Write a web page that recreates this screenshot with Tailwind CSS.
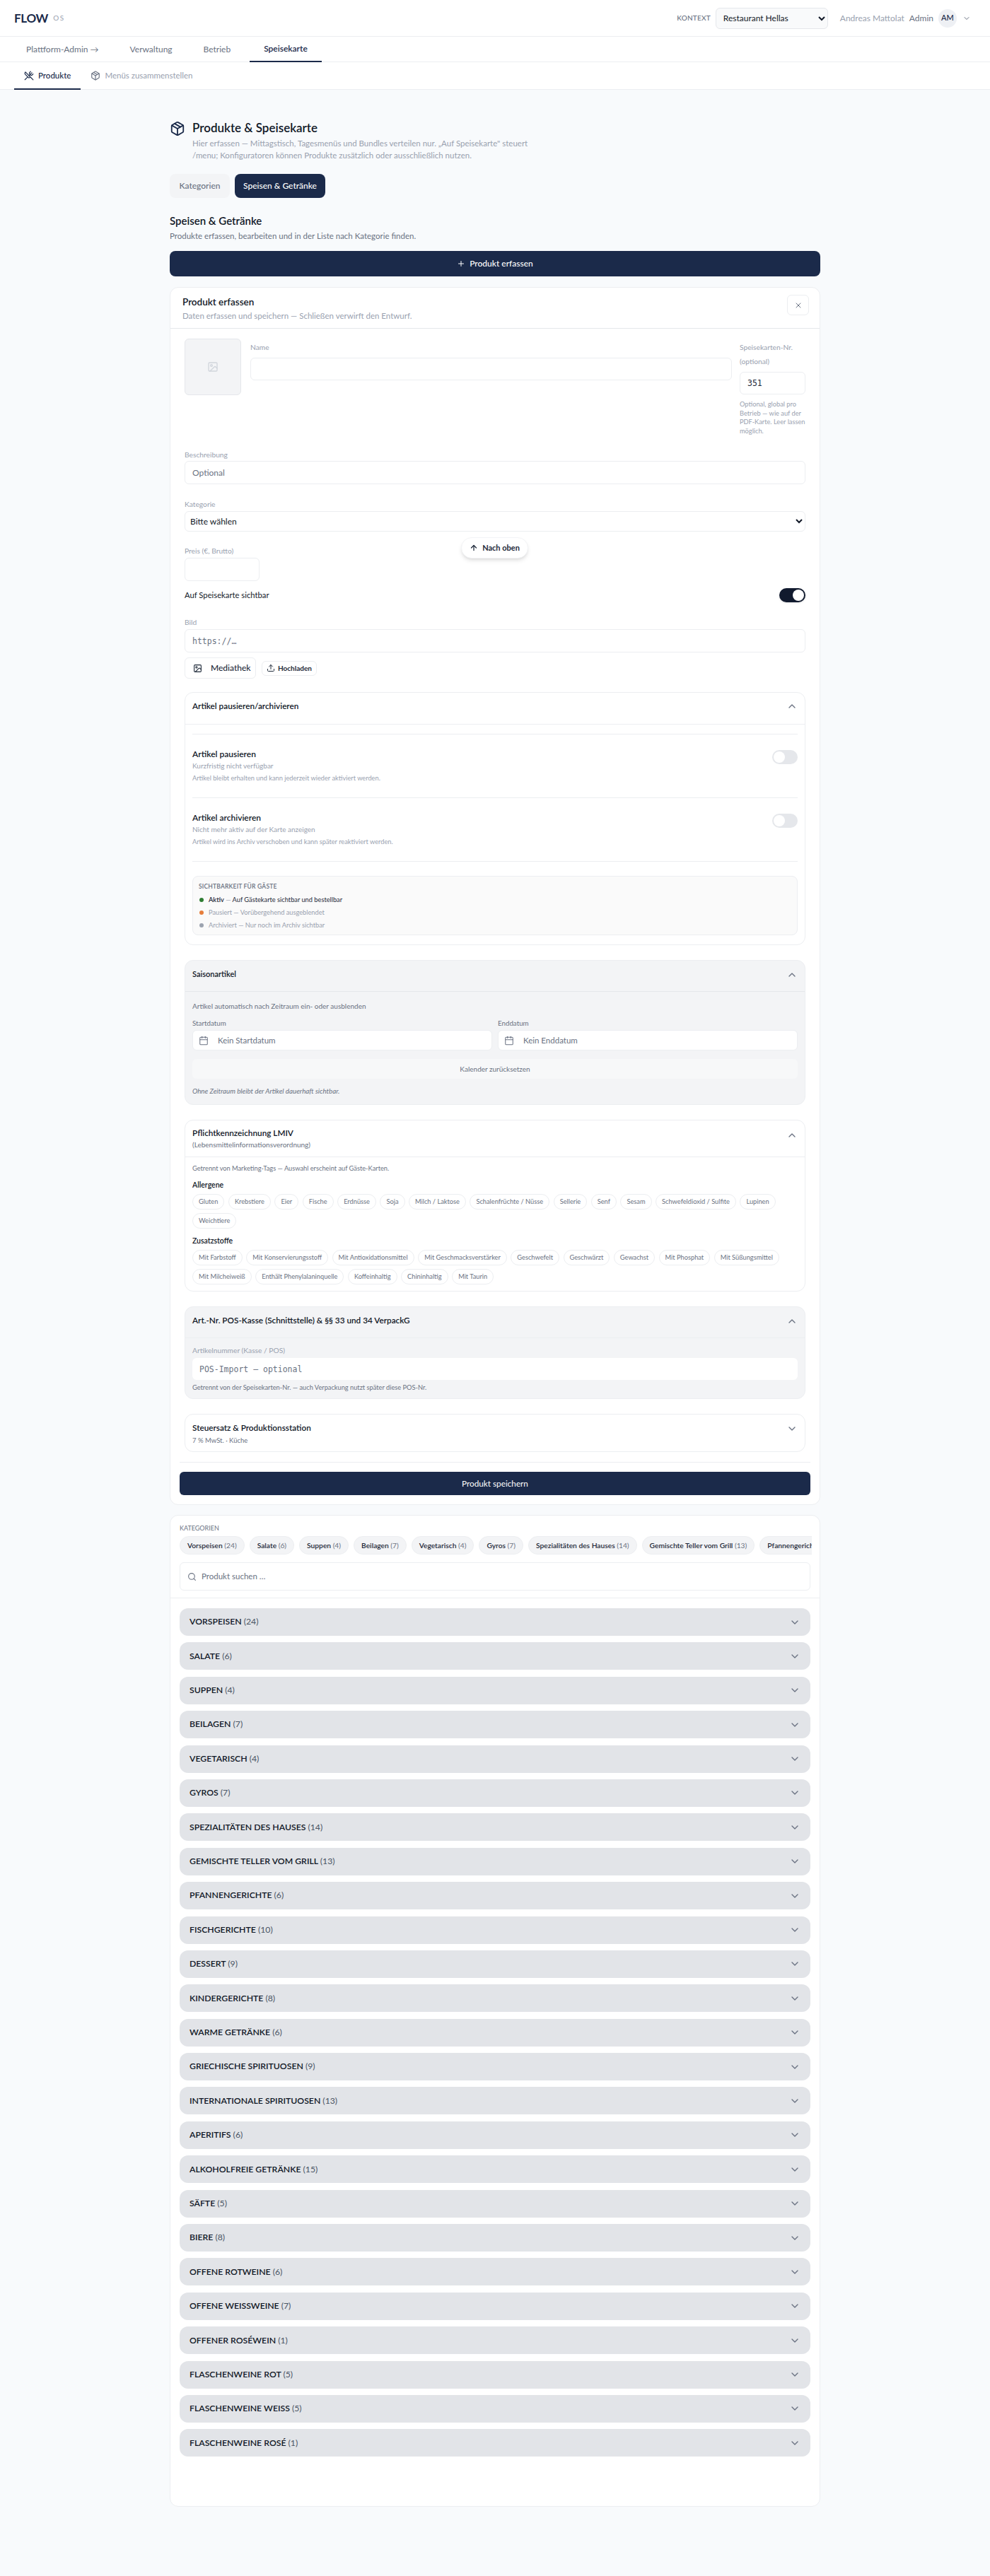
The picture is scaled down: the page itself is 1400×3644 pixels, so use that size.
<!DOCTYPE html>
<html lang="de">
<head>
  <meta charset="UTF-8" />
  <meta name="viewport" content="width=device-width, initial-scale=1.0"/>
  <title>Produkte & Speisekarte - FLOW OS</title>
  <script src="https://cdn.jsdelivr.net/npm/@tailwindcss/browser@4"></script>
</head>
<body class="bg-[#f8fafc] font-['Lato',sans-serif] text-[#111827] relative min-h-[3644px]">

  <!-- Top bar -->
  <header class="h-[52px] bg-white border-b border-[#eceef1] flex items-center pl-5 pr-[27px]">
    <span class="text-[17px] font-bold text-[#1b2a4a] tracking-[-0.3px]">FLOW</span>
    <span class="ml-[7px] text-[10px] text-gray-400 tracking-[1.5px]">OS</span>
    <div class="ml-auto flex items-center">
      <span class="text-[10px] font-medium text-gray-500 tracking-[0.2px] uppercase">Kontext</span>
      <select class="ml-[7px] w-[159px] h-[30px] pl-[6px] pr-[2px] text-[12px] text-[#111827] bg-[#f9fafb] border border-[#e5e7eb] rounded-md">
        <option>Restaurant Hellas</option>
      </select>
      <span class="ml-[17px] text-[12px] text-gray-400">Andreas Mattolat</span>
      <span class="ml-[7px] text-[12px] text-gray-500">Admin</span>
      <span class="ml-[7px] w-[26px] h-[26px] rounded-full bg-[#eef0f4] text-[11px] font-medium text-[#1b2a4a] flex items-center justify-center">AM</span>
      <svg class="ml-2 w-[12px] h-[12px] text-gray-500" viewBox="0 0 24 24" fill="none" stroke="currentColor" stroke-width="2" stroke-linecap="round" stroke-linejoin="round"><path d="m6 9 6 6 6-6"/></svg>
    </div>
  </header>

  <!-- Main nav -->
  <nav class="h-[36px] bg-white border-b border-[#eceef1] flex gap-1 pl-[17px] text-[12px] text-gray-500">
    <a class="px-5 flex items-center">Plattform-Admin →</a>
    <a class="px-5 flex items-center">Verwaltung</a>
    <a class="px-5 flex items-center">Betrieb</a>
    <a class="ml-[3px] px-5 flex items-center font-semibold text-[#1b2a4a] border-b-2 border-[#1b2a4a] h-[36px]">Speisekarte</a>
  </nav>

  <!-- Sub nav -->
  <nav class="h-[39px] bg-white border-b border-[#eceef1] flex pl-5 text-[11.5px]">
    <a class="px-[14px] flex items-center gap-[6px] font-medium text-[#1b2a4a] border-b-2 border-[#1b2a4a] h-[39px]">
      <svg class="w-[14px] h-[14px]" viewBox="0 0 24 24" fill="none" stroke="currentColor" stroke-width="2" stroke-linecap="round" stroke-linejoin="round"><path d="m16 2-2.3 2.3a3 3 0 0 0 0 4.2l1.8 1.8a3 3 0 0 0 4.2 0L22 8"/><path d="M15 15 3.3 3.3a4.2 4.2 0 0 0 0 6l7.3 7.3c.7.7 2 .7 2.8 0L15 15Zm0 0 7 7"/><path d="m2.1 21.8 6.4-6.3"/><path d="m19 5-7 7"/></svg>
      Produkte
    </a>
    <a class="px-[14px] flex items-center gap-[6px] text-gray-400">
      <svg class="w-[14px] h-[14px] text-gray-500" viewBox="0 0 24 24" fill="none" stroke="currentColor" stroke-width="2" stroke-linecap="round" stroke-linejoin="round"><path d="M11 21.73a2 2 0 0 0 2 0l7-4A2 2 0 0 0 21 16V8a2 2 0 0 0-1-1.73l-7-4a2 2 0 0 0-2 0l-7 4A2 2 0 0 0 3 8v8a2 2 0 0 0 1 1.73z"/><path d="M12 22V12"/><path d="m3.3 7 8.7 5 8.7-5"/><path d="m7.5 4.27 9 5.15"/></svg>
      Menüs zusammenstellen
    </a>
  </nav>

  <main class="w-[920px] ml-[240px] pt-[44px]">
    <!-- Page heading -->
    <div class="flex gap-[10px]">
      <svg class="w-[22px] h-[22px] mt-[0px] text-[#1b2a4a]" viewBox="0 0 24 24" fill="none" stroke="currentColor" stroke-width="2" stroke-linecap="round" stroke-linejoin="round"><path d="M11 21.73a2 2 0 0 0 2 0l7-4A2 2 0 0 0 21 16V8a2 2 0 0 0-1-1.73l-7-4a2 2 0 0 0-2 0l-7 4A2 2 0 0 0 3 8v8a2 2 0 0 0 1 1.73z"/><path d="M12 22V12"/><path d="m3.3 7 8.7 5 8.7-5"/><path d="m7.5 4.27 9 5.15"/></svg>
      <div>
        <h1 class="text-[17px] leading-[20px] font-semibold text-[#111827]">Produkte &amp; Speisekarte</h1>
        <p class="mt-[3px] text-[11.5px] leading-[17px] text-gray-400">Hier erfassen — Mittagstisch, Tagesmenüs und Bundles verteilen nur. „Auf Speisekarte" steuert<br>/menu; Konfiguratoren können Produkte zusätzlich oder ausschließlich nutzen.</p>
      </div>
    </div>

    <div class="mt-[18px] flex gap-[7px] text-[12px] font-medium">
      <button class="h-[34px] w-[85px] rounded-lg bg-[#f3f4f6] text-gray-500">Kategorien</button>
      <button class="h-[34px] w-[128px] rounded-lg bg-[#1b2a4a] text-white">Speisen &amp; Getränke</button>
    </div>

    <h2 class="mt-[23px] text-[15px] leading-[18px] font-semibold">Speisen &amp; Getränke</h2>
    <p class="mt-[5px] text-[11.5px] leading-[16px] text-gray-500">Produkte erfassen, bearbeiten und in der Liste nach Kategorie finden.</p>

    <button class="mt-[13px] w-full h-[36px] rounded-lg bg-[#1b2a4a] text-white text-[12px] font-medium flex items-center justify-center gap-[6px]">
      <svg class="w-[12px] h-[12px]" viewBox="0 0 24 24" fill="none" stroke="currentColor" stroke-width="2" stroke-linecap="round"><path d="M5 12h14"/><path d="M12 5v14"/></svg>
      Produkt erfassen
    </button>

    <!-- Product form -->
    <section class="mt-[15px] bg-white border border-[#eceef1] rounded-xl">
      <div class="h-[58px] border-b border-[#e5e7eb] flex pl-[17px] pr-[15px] pt-[12px]">
        <div>
          <h3 class="text-[13.5px] leading-[16px] font-semibold">Produkt erfassen</h3>
          <p class="mt-[4px] text-[11.5px] leading-[16px] text-gray-400">Daten erfassen und speichern — Schließen verwirft den Entwurf.</p>
        </div>
        <button class="ml-auto -mt-[2px] w-[31px] h-[29px] border border-[#eceef1] rounded-md flex items-center justify-center text-gray-500">
          <svg class="w-[12px] h-[12px]" viewBox="0 0 24 24" fill="none" stroke="currentColor" stroke-width="2" stroke-linecap="round"><path d="M18 6 6 18"/><path d="m6 6 12 12"/></svg>
        </button>
      </div>

      <div class="px-[13px] pt-[14px] pb-[13px]">
        <div class="px-[7px]">
          <!-- Photo, name, number -->
          <div class="flex items-start">
            <div class="w-[80px] h-[80px] bg-[#f3f4f6] border border-[#e5e7eb] rounded-md flex items-center justify-center text-gray-300">
              <svg class="w-[16px] h-[16px]" viewBox="0 0 24 24" fill="none" stroke="currentColor" stroke-width="2" stroke-linecap="round" stroke-linejoin="round"><rect x="3" y="3" width="18" height="18" rx="2"/><circle cx="9" cy="9" r="2"/><path d="m21 15-3.086-3.086a2 2 0 0 0-2.828 0L6 21"/></svg>
            </div>
            <div class="ml-[13px] flex-1 pt-[2px]">
              <label class="block h-[20px] leading-[20px] mb-[5px] text-[10.25px] text-gray-400">Name</label>
              <input class="block w-full h-[32px] border border-[#eceef1] rounded-md bg-white" />
            </div>
            <div class="ml-[11px] w-[93px] pt-[2px]">
              <label class="block leading-[20px] mb-[5px] text-[10.25px] text-gray-400">Speisekarten-Nr. (optional)</label>
              <input class="block w-full h-[32px] px-[10px] border border-[#eceef1] rounded-md font-['DejaVu_Sans_Mono',monospace] text-[11.5px] text-gray-800" value="351" />
              <p class="mt-[8px] text-[9.25px] leading-[12.5px] text-gray-400">Optional, global pro Betrieb — wie auf der PDF-Karte. Leer lassen möglich.</p>
            </div>
          </div>

          <label class="block mt-[20px] h-[14px] leading-[14px] text-[10.25px] text-gray-400">Beschreibung</label>
          <input class="block mt-[2px] w-full h-[33px] px-[10px] border border-[#eceef1] rounded-md text-[12px] placeholder:text-gray-500" placeholder="Optional" />

          <label class="block mt-[21px] h-[14px] leading-[14px] text-[10.25px] text-gray-400">Kategorie</label>
          <select class="block mt-[3px] w-full h-[29px] pl-[3px] pr-[2px] border border-[#eceef1] rounded-md bg-white text-[12px]"><option>Bitte wählen</option></select>

          <label class="block mt-[20px] h-[14px] leading-[14px] text-[10.25px] text-gray-400">Preis (€, Brutto)</label>
          <input class="block mt-[3px] w-[106px] h-[33px] border border-[#eceef1] rounded-md" />

          <div class="mt-[10px] h-[20px] flex items-center justify-between">
            <span class="text-[11.25px]">Auf Speisekarte sichtbar</span>
            <span class="w-[37px] h-[20px] rounded-full bg-[#111a2e] p-[2px] flex justify-end shadow-sm"><span class="w-[16px] h-[16px] rounded-full bg-white"></span></span>
          </div>

          <label class="block mt-[21px] h-[14px] leading-[14px] text-[10.25px] text-gray-400">Bild</label>
          <input class="block mt-[3px] w-full h-[33px] px-[10px] border border-[#eceef1] rounded-md font-['DejaVu_Sans_Mono',monospace] text-[11.5px] placeholder:text-gray-500" placeholder="https://…" />

          <div class="mt-[7px] flex items-center gap-2">
            <button class="w-[101px] h-[30px] border border-[#eceef1] rounded-md flex items-center pl-[11px] gap-[12px] text-[12px] font-medium text-gray-800">
              <svg class="w-[13px] h-[13px]" viewBox="0 0 24 24" fill="none" stroke="currentColor" stroke-width="2" stroke-linecap="round" stroke-linejoin="round"><rect x="3" y="3" width="18" height="18" rx="2"/><circle cx="9" cy="9" r="2"/><path d="m21 15-3.086-3.086a2 2 0 0 0-2.828 0L6 21"/></svg>
              Mediathek
            </button>
            <button class="w-[78px] h-[21px] border border-[#eceef1] rounded-md flex items-center justify-center gap-[4px] text-[10px] font-bold text-gray-800">
              <svg class="w-[12px] h-[12px]" viewBox="0 0 24 24" fill="none" stroke="currentColor" stroke-width="2" stroke-linecap="round" stroke-linejoin="round"><path d="M21 15v4a2 2 0 0 1-2 2H5a2 2 0 0 1-2-2v-4"/><path d="M17 8l-5-5-5 5"/><path d="M12 3v12"/></svg>
              Hochladen
            </button>
          </div>

          <!-- Pause / archive -->
          <div class="mt-[19px] border border-[#eceef1] rounded-xl bg-white">
            <div class="h-[45px] border-b border-[#eceef1] flex justify-between px-[10px] pt-[12px]">
              <h4 class="text-[11.75px] leading-[14px] font-semibold">Artikel pausieren/archivieren</h4>
              <svg class="w-[16px] h-[16px] -mt-px text-gray-500" viewBox="0 0 24 24" fill="none" stroke="currentColor" stroke-width="2" stroke-linecap="round" stroke-linejoin="round"><path d="m18 15-6-6-6 6"/></svg>
            </div>
            <div class="px-[10px] pt-[13px] pb-[13px]">
              <div class="h-[90px] border-t border-[#eceef1] flex justify-between pt-[20px]">
                <div>
                  <p class="text-[12px] leading-[16px] font-semibold">Artikel pausieren</p>
                  <p class="text-[10px] leading-[16px] text-gray-400">Kurzfristig nicht verfügbar</p>
                  <p class="mt-[3px] text-[9.25px] leading-[14px] text-gray-400">Artikel bleibt erhalten und kann jederzeit wieder aktiviert werden.</p>
                </div>
                <span class="mt-[2px] w-[36px] h-[20px] rounded-full bg-[#e5e7eb] p-[2px] flex"><span class="w-[16px] h-[16px] rounded-full bg-white"></span></span>
              </div>
              <div class="h-[90px] border-t border-[#eceef1] flex justify-between pt-[20px]">
                <div>
                  <p class="text-[12px] leading-[16px] font-semibold">Artikel archivieren</p>
                  <p class="text-[10px] leading-[16px] text-gray-400">Nicht mehr aktiv auf der Karte anzeigen</p>
                  <p class="mt-[3px] text-[9.25px] leading-[14px] text-gray-400">Artikel wird ins Archiv verschoben und kann später reaktiviert werden.</p>
                </div>
                <span class="mt-[2px] w-[36px] h-[20px] rounded-full bg-[#e5e7eb] p-[2px] flex"><span class="w-[16px] h-[16px] rounded-full bg-white"></span></span>
              </div>
              <div class="border-t border-[#eceef1] pt-[20px]">
                <div class="h-[84px] border border-[#eceef1] rounded-lg bg-[#fafafa] pl-2 pt-2">
                  <p class="text-[8.5px] leading-[12px] font-semibold text-gray-500 tracking-[0.2px] uppercase">Sichtbarkeit für Gäste</p>
                  <ul class="mt-[4px] text-[9.25px] leading-[18px]">
                    <li class="flex items-center gap-[7px] text-gray-800"><span class="w-[6px] h-[6px] ml-[1px] rounded-full bg-[#2e7d32]"></span><span><b class="font-semibold">Aktiv</b> <span class="text-gray-400">—</span> Auf Gästekarte sichtbar und bestellbar</span></li>
                    <li class="flex items-center gap-[7px] text-gray-400"><span class="w-[6px] h-[6px] ml-[1px] rounded-full bg-[#e67e3c]"></span>Pausiert — Vorübergehend ausgeblendet</li>
                    <li class="flex items-center gap-[7px] text-gray-400"><span class="w-[6px] h-[6px] ml-[1px] rounded-full bg-[#9ca3af]"></span>Archiviert — Nur noch im Archiv sichtbar</li>
                  </ul>
                </div>
              </div>
            </div>
          </div>

          <!-- Seasonal -->
          <div class="mt-[21px] border border-[#eceef1] rounded-xl bg-[#f3f4f6]">
            <div class="h-[44px] border-b border-[#e5e7eb] flex justify-between px-[10px] pt-[12px]">
              <h4 class="text-[11px] leading-[14px] font-semibold">Saisonartikel</h4>
              <svg class="w-[16px] h-[16px] text-gray-500" viewBox="0 0 24 24" fill="none" stroke="currentColor" stroke-width="2" stroke-linecap="round" stroke-linejoin="round"><path d="m18 15-6-6-6 6"/></svg>
            </div>
            <div class="px-[10px] pt-[13px] pb-[12px]">
              <p class="text-[10px] leading-[14px] text-gray-500">Artikel automatisch nach Zeitraum ein- oder ausblenden</p>
              <div class="mt-[10px] grid grid-cols-2 gap-2">
                <div>
                  <label class="block h-[14px] leading-[14px] text-[9.75px] text-gray-500">Startdatum</label>
                  <div class="mt-[3px] h-[29px] bg-white border border-[#eceef1] rounded-md flex items-center pl-[8px] gap-[3px] text-[11.5px] text-gray-500">
                    <svg class="w-[14px] h-[14px]" viewBox="0 0 24 24" fill="none" stroke="currentColor" stroke-width="1.75" stroke-linecap="round" stroke-linejoin="round"><path d="M8 2v4"/><path d="M16 2v4"/><rect width="18" height="18" x="3" y="4" rx="2"/><path d="M3 10h18"/></svg>
                    <span class="ml-[10px]">Kein Startdatum</span>
                  </div>
                </div>
                <div>
                  <label class="block h-[14px] leading-[14px] text-[9.75px] text-gray-500">Enddatum</label>
                  <div class="mt-[3px] h-[29px] bg-white border border-[#eceef1] rounded-md flex items-center pl-[8px] gap-[3px] text-[11.5px] text-gray-500">
                    <svg class="w-[14px] h-[14px]" viewBox="0 0 24 24" fill="none" stroke="currentColor" stroke-width="1.75" stroke-linecap="round" stroke-linejoin="round"><path d="M8 2v4"/><path d="M16 2v4"/><rect width="18" height="18" x="3" y="4" rx="2"/><path d="M3 10h18"/></svg>
                    <span class="ml-[10px]">Kein Enddatum</span>
                  </div>
                </div>
              </div>
              <button class="mt-[12px] w-full h-[28px] rounded-md bg-[#f7f8f9] text-[10px] text-gray-500">Kalender zurücksetzen</button>
              <p class="mt-[10px] text-[9.75px] leading-[14px] italic text-gray-500">Ohne Zeitraum bleibt der Artikel dauerhaft sichtbar.</p>
            </div>
          </div>

          <!-- LMIV -->
          <div class="mt-[21px] border border-[#eceef1] rounded-xl bg-white">
            <div class="h-[52px] border-b border-[#eceef1] flex justify-between px-[10px] pt-[11px]">
              <div>
                <h4 class="text-[11.75px] leading-[14px] font-semibold">Pflichtkennzeichnung LMIV</h4>
                <p class="mt-[2px] text-[10px] leading-[14px] text-gray-500">(Lebensmittelinformationsverordnung)</p>
              </div>
              <svg class="w-[16px] h-[16px] mt-[2px] text-gray-500" viewBox="0 0 24 24" fill="none" stroke="currentColor" stroke-width="2" stroke-linecap="round" stroke-linejoin="round"><path d="m18 15-6-6-6 6"/></svg>
            </div>
            <div class="px-[10px] pt-[9px] pb-[9px]">
              <p class="text-[9.25px] leading-[14px] text-gray-500">Getrennt von Marketing-Tags — Auswahl erscheint auf Gäste-Karten.</p>
              <p class="mt-[9px] text-[10.5px] leading-[14px] font-semibold">Allergene</p>
              <div class="mt-[6px] flex flex-wrap gap-x-[5.5px] gap-y-[5px] text-[9.25px] leading-[20px] text-gray-500">
                <span class="h-[22px] px-[8px] border border-[#eceef1] rounded-full">Gluten</span>
                <span class="h-[22px] px-[8px] border border-[#eceef1] rounded-full">Krebstiere</span>
                <span class="h-[22px] px-[8px] border border-[#eceef1] rounded-full">Eier</span>
                <span class="h-[22px] px-[8px] border border-[#eceef1] rounded-full">Fische</span>
                <span class="h-[22px] px-[8px] border border-[#eceef1] rounded-full">Erdnüsse</span>
                <span class="h-[22px] px-[8px] border border-[#eceef1] rounded-full">Soja</span>
                <span class="h-[22px] px-[8px] border border-[#eceef1] rounded-full">Milch / Laktose</span>
                <span class="h-[22px] px-[8px] border border-[#eceef1] rounded-full">Schalenfrüchte / Nüsse</span>
                <span class="h-[22px] px-[8px] border border-[#eceef1] rounded-full">Sellerie</span>
                <span class="h-[22px] px-[8px] border border-[#eceef1] rounded-full">Senf</span>
                <span class="h-[22px] px-[8px] border border-[#eceef1] rounded-full">Sesam</span>
                <span class="h-[22px] px-[8px] border border-[#eceef1] rounded-full">Schwefeldioxid / Sulfite</span>
                <span class="h-[22px] px-[8px] border border-[#eceef1] rounded-full">Lupinen</span>
                <span class="h-[22px] px-[8px] border border-[#eceef1] rounded-full">Weichtiere</span>
              </div>
              <p class="mt-[10px] text-[10.5px] leading-[14px] font-semibold">Zusatzstoffe</p>
              <div class="mt-[6px] flex flex-wrap gap-x-[5.5px] gap-y-[5px] text-[9.25px] leading-[20px] text-gray-500">
                <span class="h-[22px] px-[8px] border border-[#eceef1] rounded-full">Mit Farbstoff</span>
                <span class="h-[22px] px-[8px] border border-[#eceef1] rounded-full">Mit Konservierungsstoff</span>
                <span class="h-[22px] px-[8px] border border-[#eceef1] rounded-full">Mit Antioxidationsmittel</span>
                <span class="h-[22px] px-[8px] border border-[#eceef1] rounded-full">Mit Geschmacksverstärker</span>
                <span class="h-[22px] px-[8px] border border-[#eceef1] rounded-full">Geschwefelt</span>
                <span class="h-[22px] px-[8px] border border-[#eceef1] rounded-full">Geschwärzt</span>
                <span class="h-[22px] px-[8px] border border-[#eceef1] rounded-full">Gewachst</span>
                <span class="h-[22px] px-[8px] border border-[#eceef1] rounded-full">Mit Phosphat</span>
                <span class="h-[22px] px-[8px] border border-[#eceef1] rounded-full">Mit Süßungsmittel</span>
                <span class="h-[22px] px-[8px] border border-[#eceef1] rounded-full">Mit Milcheiweiß</span>
                <span class="h-[22px] px-[8px] border border-[#eceef1] rounded-full">Enthält Phenylalaninquelle</span>
                <span class="h-[22px] px-[8px] border border-[#eceef1] rounded-full">Koffeinhaltig</span>
                <span class="h-[22px] px-[8px] border border-[#eceef1] rounded-full">Chininhaltig</span>
                <span class="h-[22px] px-[8px] border border-[#eceef1] rounded-full">Mit Taurin</span>
              </div>
            </div>
          </div>

          <!-- POS -->
          <div class="mt-[21px] border border-[#eceef1] rounded-xl bg-[#f3f4f6]">
            <div class="h-[44px] border-b border-[#eceef1] flex justify-between px-[10px] pt-[12px]">
              <h4 class="text-[11.75px] leading-[14px] font-semibold">Art.-Nr. POS-Kasse (Schnittstelle) &amp; §§ 33 und 34 VerpackG</h4>
              <svg class="w-[16px] h-[16px] text-gray-500" viewBox="0 0 24 24" fill="none" stroke="currentColor" stroke-width="2" stroke-linecap="round" stroke-linejoin="round"><path d="m18 15-6-6-6 6"/></svg>
            </div>
            <div class="px-[10px] pt-[10px] pb-[8px]">
              <label class="block h-[14px] leading-[14px] text-[10.25px] text-gray-400">Artikelnummer (Kasse / POS)</label>
              <input class="block mt-[4px] w-full h-[31px] px-[10px] rounded-md bg-white font-['DejaVu_Sans_Mono',monospace] text-[11.5px] placeholder:text-gray-500" placeholder="POS-Import — optional" />
              <p class="mt-[4px] text-[9.25px] leading-[14px] text-gray-500">Getrennt von der Speisekarten-Nr. — auch Verpackung nutzt später diese POS-Nr.</p>
            </div>
          </div>

          <!-- Tax -->
          <div class="mt-[21px] h-[54px] border border-[#eceef1] rounded-xl bg-white flex justify-between px-[10px] pt-[11px]">
            <div>
              <h4 class="text-[11.75px] leading-[16px] font-semibold">Steuersatz &amp; Produktionsstation</h4>
              <p class="mt-[3px] text-[9.5px] leading-[14px] text-gray-500">7 % MwSt. · Küche</p>
            </div>
            <svg class="w-[16px] h-[16px] mt-px text-gray-500" viewBox="0 0 24 24" fill="none" stroke="currentColor" stroke-width="2" stroke-linecap="round" stroke-linejoin="round"><path d="m6 9 6 6 6-6"/></svg>
          </div>
        </div>

        <div class="mt-[14px] border-t border-[#eceef1]"></div>
        <button class="mt-[13px] w-full h-[33px] rounded-md bg-[#1b2a4a] text-[11.75px] text-white">Produkt speichern</button>
      </div>
    </section>

    <!-- Category list -->
    <section class="mt-[14px] bg-white border border-[#eceef1] rounded-xl pb-[70px]">
      <div class="px-[13px] pt-[12px] pb-[10px] border-b border-[#eceef1]">
        <p class="text-[9px] leading-[12px] text-gray-500 uppercase">Kategorien</p>
        <div class="mt-[5px] -mr-[2px] flex gap-[7px] overflow-hidden text-[10.25px] font-semibold whitespace-nowrap text-gray-800">
          <span class="h-[26px] leading-[24px] px-[10px] bg-[#f3f4f6] border border-[#eceef1] rounded-full">Vorspeisen <span class="font-normal text-gray-500">(24)</span></span>
          <span class="h-[26px] leading-[24px] px-[10px] bg-[#f3f4f6] border border-[#eceef1] rounded-full">Salate <span class="font-normal text-gray-500">(6)</span></span>
          <span class="h-[26px] leading-[24px] px-[10px] bg-[#f3f4f6] border border-[#eceef1] rounded-full">Suppen <span class="font-normal text-gray-500">(4)</span></span>
          <span class="h-[26px] leading-[24px] px-[10px] bg-[#f3f4f6] border border-[#eceef1] rounded-full">Beilagen <span class="font-normal text-gray-500">(7)</span></span>
          <span class="h-[26px] leading-[24px] px-[10px] bg-[#f3f4f6] border border-[#eceef1] rounded-full">Vegetarisch <span class="font-normal text-gray-500">(4)</span></span>
          <span class="h-[26px] leading-[24px] px-[10px] bg-[#f3f4f6] border border-[#eceef1] rounded-full">Gyros <span class="font-normal text-gray-500">(7)</span></span>
          <span class="h-[26px] leading-[24px] px-[10px] bg-[#f3f4f6] border border-[#eceef1] rounded-full">Spezialitäten des Hauses <span class="font-normal text-gray-500">(14)</span></span>
          <span class="h-[26px] leading-[24px] px-[10px] bg-[#f3f4f6] border border-[#eceef1] rounded-full">Gemischte Teller vom Grill <span class="font-normal text-gray-500">(13)</span></span>
          <span class="h-[26px] leading-[24px] px-[10px] bg-[#f3f4f6] border border-[#eceef1] rounded-full">Pfannengerichte <span class="font-normal text-gray-500">(6)</span></span>
        </div>
        <div class="mt-[11px] h-[40px] border border-[#eceef1] rounded-md flex items-center pl-[10px] gap-[7px] text-gray-500">
          <svg class="w-[13px] h-[13px]" viewBox="0 0 24 24" fill="none" stroke="currentColor" stroke-width="2" stroke-linecap="round" stroke-linejoin="round"><circle cx="11" cy="11" r="8"/><path d="m21 21-4.3-4.3"/></svg>
          <input class="flex-1 text-[11.5px] placeholder:text-gray-500" placeholder="Produkt suchen …" />
        </div>
      </div>
      <div id="rows" class="px-[13px] pt-[14px] flex flex-col gap-[9.4px]"></div>
    </section>
  </main>

  <!-- Floating scroll-to-top -->
  <button class="absolute left-[652px] top-[760px] w-[95px] h-[30px] rounded-full bg-white border border-[#f3f4f6] shadow-md flex items-center justify-center gap-[6px] text-[11px] font-bold text-gray-800">
    <svg class="w-[12px] h-[12px]" viewBox="0 0 24 24" fill="none" stroke="currentColor" stroke-width="2.5" stroke-linecap="round" stroke-linejoin="round"><path d="m5 12 7-7 7 7"/><path d="M12 19V5"/></svg>
    Nach oben
  </button>

  <script>
    const categories = [
      ["Vorspeisen", 24], ["Salate", 6], ["Suppen", 4], ["Beilagen", 7], ["Vegetarisch", 4],
      ["Gyros", 7], ["Spezialitäten des Hauses", 14], ["Gemischte Teller vom Grill", 13],
      ["Pfannengerichte", 6], ["Fischgerichte", 10], ["Dessert", 9], ["Kindergerichte", 8],
      ["Warme Getränke", 6], ["Griechische Spirituosen", 9], ["Internationale Spirituosen", 13],
      ["Aperitifs", 6], ["Alkoholfreie Getränke", 15], ["Säfte", 5], ["Biere", 8],
      ["Offene Rotweine", 6], ["Offene Weissweine", 7], ["Offener Roséwein", 1],
      ["Flaschenweine Rot", 5], ["Flaschenweine Weiss", 5], ["Flaschenweine Rosé", 1]
    ];
    document.getElementById("rows").innerHTML = categories.map(([name, count]) => `
      <div class="h-[39px] rounded-xl bg-[#e2e4e8] flex items-center justify-between pl-[14px] pr-[14px]">
        <span class="text-[12.25px] font-semibold uppercase">${name} <span class="font-normal text-gray-600">(${count})</span></span>
        <svg class="w-[16px] h-[16px] text-gray-500" viewBox="0 0 24 24" fill="none" stroke="currentColor" stroke-width="2" stroke-linecap="round" stroke-linejoin="round"><path d="m6 9 6 6 6-6"/></svg>
      </div>`).join("");
  </script>
</body>
</html>
